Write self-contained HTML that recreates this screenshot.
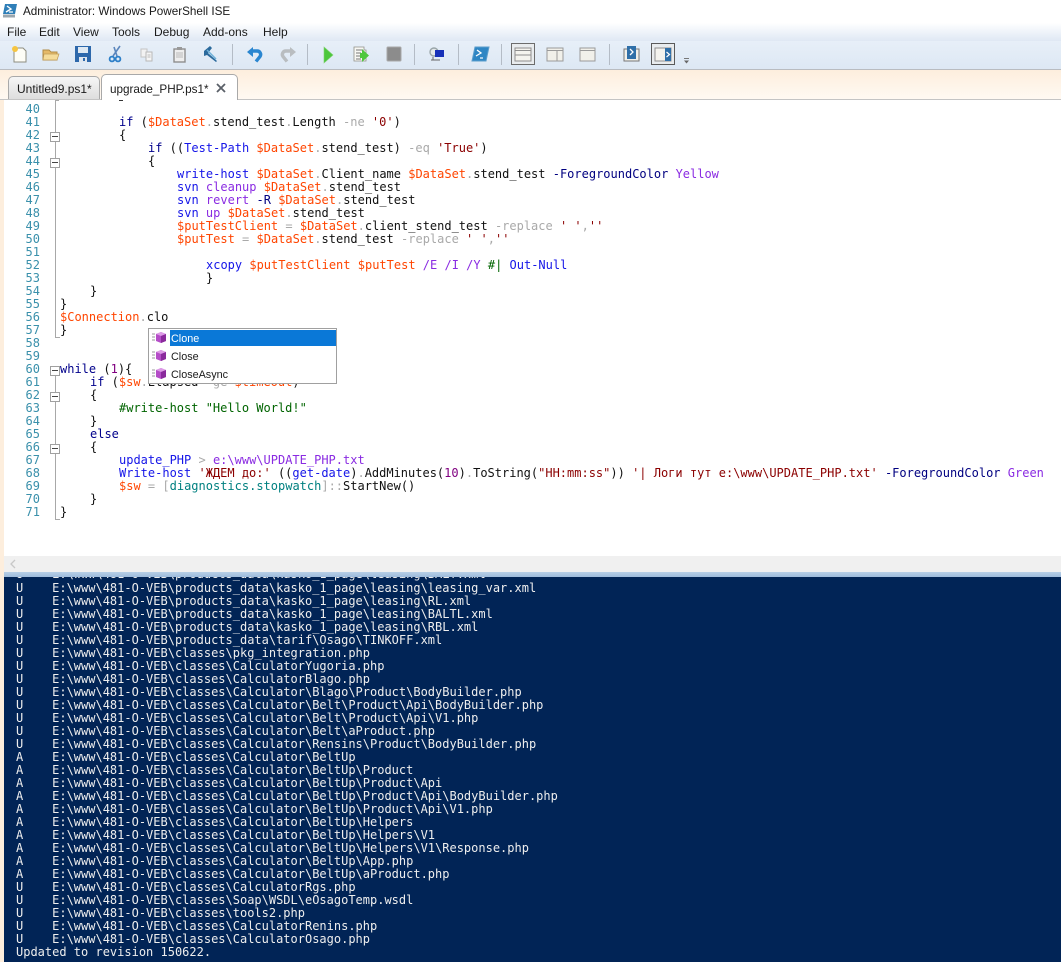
<!DOCTYPE html>
<html><head><meta charset="utf-8"><style>
html,body{margin:0;padding:0;background:#fff}
#r{position:relative;width:1061px;height:962px;overflow:hidden;background:#fff;font-family:"Liberation Sans",sans-serif;color:#1a1a1a}
.a{position:absolute}
.t{position:absolute;white-space:pre;font-size:12px}
.l{position:absolute;white-space:pre;font:12px/13px "DejaVu Sans Mono","Noto Sans CJK JP",monospace;height:13px;color:#111}
.n{position:absolute;width:36px;left:4px;text-align:right;font:12px/13px "DejaVu Sans Mono",monospace;color:#3a90ab}
.v{color:#ff4500}.c{color:#1515e8}.g{color:#8a2be2}.k{color:#00008b}.s{color:#8b0000}.o{color:#a9a9a9}.d{color:#800080}.m{color:#006400}.p{color:#000080}.y{color:#008080}
.f{position:absolute;left:50px;width:8px;height:8px;border:1px solid #a0a0a0;background:#fff;margin-top:1px}
.f:after{content:"";position:absolute;left:1px;top:3px;width:6px;height:1px;background:#444}
.ct{position:absolute;left:16px;white-space:pre;font:12px/13px "DejaVu Sans Mono",monospace;color:#eee;height:13px;margin-top:1px}
</style></head><body><div id="r">

<!-- title -->
<svg class="a" style="left:2px;top:3px" width="16" height="16" viewBox="0 0 16 16"><path d="M3 1h12l-2 10H1z" fill="#2f7fb8"/><path d="M1 11.500h12v3H1z" fill="#9aa6ae"/><path d="M5 3l4 3-5 3" fill="none" stroke="#fff" stroke-width="1.400"/><path d="M7 9h4" stroke="#fff" stroke-width="1.200"/></svg>
<div class="t" style="left:23px;top:4px;font-size:11.700px;line-height:15px">Administrator: Windows PowerShell ISE</div>

<!-- menu -->
<div class="a" style="left:0;top:23px;width:1061px;height:47px;background:linear-gradient(#ffffff 0,#f2f6fb 7px,#dfe8f4 18px,#e7eff8 18px,#dde8f4 46px)"></div>
<div class="t" style="left:7px;top:25px;line-height:15px">File</div>
<div class="t" style="left:39px;top:25px;line-height:15px">Edit</div>
<div class="t" style="left:73px;top:25px;line-height:15px">View</div>
<div class="t" style="left:112px;top:25px;line-height:15px">Tools</div>
<div class="t" style="left:154px;top:25px;line-height:15px">Debug</div>
<div class="t" style="left:203px;top:25px;line-height:15px">Add-ons</div>
<div class="t" style="left:263px;top:25px;line-height:15px">Help</div>
<div class="a" style="left:0;top:69px;width:1061px;height:1px;background:#b9bcc0"></div>

<!-- toolbar icons -->
<svg class="a" style="left:0;top:40px" width="1061" height="30" viewBox="0 40 1061 30">
<!-- new -->
<path d="M14 48h9l3 3v11H14z" fill="#fdfdf6" stroke="#8d8d80"/><circle cx="15" cy="49" r="3" fill="#f5c542"/>
<!-- open -->
<path d="M43 50h6l2 2h6v8H43z" fill="#e5b968" stroke="#b08b45"/><path d="M44 54h15l-2 6H43z" fill="#f5dc9a" stroke="#c09a55" stroke-width=".7"/>
<!-- save -->
<rect x="75" y="46" width="16" height="16" fill="#2d68ab"/><rect x="78" y="47" width="10" height="6" fill="#dfe9f2"/><rect x="79" y="57" width="8" height="5" fill="#dfe6ee"/><rect x="83" y="58" width="2" height="3" fill="#2d68ab"/>
<!-- cut -->
<path d="M120 46l-7 10M114 47l3 9" stroke="#5b86bd" stroke-width="1.600" fill="none"/><circle cx="112" cy="59" r="2.400" fill="none" stroke="#2d7fc8" stroke-width="1.800"/><circle cx="118" cy="59" r="2.400" fill="none" stroke="#2d7fc8" stroke-width="1.800"/>
<!-- copy -->
<path d="M141 49h6v8h-6z" fill="#f2f2f2" stroke="#c4c4c4"/><path d="M146 52h6v9h-6z" fill="#f5f5f5" stroke="#b8b8b8"/><path d="M147.500 55h3M147.500 57h3" stroke="#bbb"/>
<!-- paste -->
<rect x="174" y="49" width="11" height="13" fill="#eee" stroke="#8e8e8e" stroke-width="1.400"/><rect x="177" y="47" width="5" height="3" fill="#999"/><path d="M176 53h7M176 55h7M176 57h7" stroke="#bbb"/>
<!-- clear -->
<path d="M204 51l6-5 2 2-4 5 9 8-1 1-9-7-3 1z" fill="#2b6a9c"/><path d="M207 50l9 9" stroke="#6db0d8" stroke-width="1.500"/>
<rect x="232" y="44" width="1" height="21" fill="#b4bcc6"/>
<!-- undo -->
<path d="M253 51h4a3.500 3.500 0 0 1 3 5.500l-4 5" fill="none" stroke="#2a86d0" stroke-width="3.400"/><path d="M247 52l6-5v10z" fill="#2a86d0"/>
<!-- redo -->
<path d="M290 51h-4a3.500 3.500 0 0 0-3 5.500l4 5" fill="none" stroke="#b9bdc0" stroke-width="3.400"/><path d="M296 52l-6-5v10z" fill="#b9bdc0"/>
<rect x="307" y="44" width="1" height="21" fill="#b4bcc6"/>
<!-- run -->
<path d="M324 47l9 8-9 8z" fill="#4cc73b" stroke="#7fd070" stroke-width=".6"/>
<!-- run selection -->
<path d="M354 47h10v3h2v11h-12z" fill="#f8f8f4" stroke="#909088" stroke-width=".8"/><path d="M356 50h6M356 53h5M356 56h5M356 59h5" stroke="#777"/><path d="M362 49l7 6.500-7 6.500z" fill="#4fc73e"/><path d="M360 53h3v5h-3z" fill="#4fc73e"/>
<!-- stop -->
<rect x="387" y="47" width="14" height="14" rx="1" fill="#8c8c8c" stroke="#a8a8a8"/>
<rect x="414" y="44" width="1" height="21" fill="#b4bcc6"/>
<!-- remote -->
<circle cx="434" cy="52" r="4" fill="#e4e8ea" stroke="#99a5a8" stroke-width="1.400"/><rect x="435" y="50" width="9" height="7" fill="#1730b8"/><path d="M433 57v3h7M431 60h9" stroke="#666" fill="none"/>
<rect x="458" y="44" width="1" height="21" fill="#b4bcc6"/>
<!-- PS -->
<path d="M475 47h14l-3 14h-14z" fill="#2e86c4" stroke="#5b9dcb"/><path d="M477 50l4 3-5 3" stroke="#fff" stroke-width="1.300" fill="none"/><path d="M480 58h3" stroke="#fff" stroke-width="1.200"/>
<rect x="501" y="44" width="1" height="21" fill="#b4bcc6"/>
<!-- layout 1 -->
<rect x="511.500" y="43.500" width="23" height="21" fill="#e9ecee" stroke="#6c6c6c"/>
<rect x="515" y="48" width="16" height="13" fill="#f4f3ee" stroke="#8e8e8e"/><path d="M515 50.500h16M515 55h16" stroke="#8e8e8e"/>
<!-- layout 2 -->
<rect x="547" y="48" width="16" height="13" fill="#f1f0ea" stroke="#9a9a9a"/><path d="M547 50.500h16M557 50v11" stroke="#9a9a9a"/>
<!-- layout 3 -->
<rect x="580" y="48" width="15" height="13" fill="#f1f0ea" stroke="#9a9a9a"/><path d="M580 50.500h15" stroke="#9a9a9a"/>
<rect x="609" y="44" width="1" height="21" fill="#b4bcc6"/>
<!-- script pane top -->
<rect x="624" y="49" width="15" height="12" fill="#f1f0ea" stroke="#777"/><rect x="627" y="46" width="9" height="13" fill="#2f6fa8"/><path d="M630 49l3 3-3 3" stroke="#fff" stroke-width="1.300" fill="none"/>
<!-- script pane right -->
<rect x="651.500" y="43.500" width="23" height="21" fill="#e9ecee" stroke="#5a5a5a"/>
<rect x="655" y="48" width="16" height="13" fill="#f4f3ee" stroke="#8e8e8e"/><rect x="665" y="48" width="6" height="13" fill="#2f6fa8"/><path d="M666.500 52l3 2.500-3 2.500" stroke="#fff" stroke-width="1.200" fill="none"/>
<!-- overflow -->
<path d="M684 58.500h5" stroke="#777"/><path d="M684 60.500h5l-2.500 3z" fill="#666"/>
</svg>

<!-- tab strip -->
<div class="a" style="left:0;top:70px;width:1061px;height:29px;background:linear-gradient(#fdeedd,#fff9f2)"></div>
<div class="a" style="left:8px;top:76px;width:92px;height:24px;box-sizing:border-box;border:1px solid #a9a9a9;border-bottom:none;border-radius:5px 5px 0 0;background:linear-gradient(#f6f6f6,#dcdcdc)"></div>
<div class="t" style="left:17px;top:82px;line-height:15px">Untitled9.ps1*</div>
<div class="a" style="left:0;top:99px;width:1061px;height:1px;background:#c4c4c4"></div>
<div class="a" style="left:101px;top:74px;width:137px;height:26px;box-sizing:border-box;border:1px solid #a9a9a9;border-bottom:none;border-radius:5px 5px 0 0;background:#fff"></div>
<div class="t" style="left:110px;top:82px;line-height:15px;font-size:11.700px">upgrade_PHP.ps1*</div>
<svg class="a" style="left:216px;top:83px" width="10" height="10"><path d="M1 1l8 8M9 1l-8 8" stroke="#5a6068" stroke-width="1.800"/></svg>

<!-- editor -->
<div class="a" style="left:0;top:100px;width:4px;height:862px;background:#fdeedd"></div>
<div class="a" style="left:55px;top:100px;width:1px;height:237px;background:#a8a8a8"></div>
<div class="a" style="left:55px;top:100px;width:4px;height:1px;background:#a8a8a8"></div>
<div class="a" style="left:55px;top:337px;width:5px;height:1px;background:#a8a8a8"></div>
<div class="a" style="left:55px;top:369px;width:1px;height:150px;background:#a8a8a8"></div>
<div class="a" style="left:55px;top:519px;width:5px;height:1px;background:#a8a8a8"></div>
<div class="f" style="top:131px"></div><div class="f" style="top:157px"></div><div class="f" style="top:365px"></div><div class="f" style="top:391px"></div><div class="f" style="top:443px"></div>

<div class="n" style="top:103px">40</div><div class="n" style="top:116px">41</div><div class="n" style="top:129px">42</div><div class="n" style="top:142px">43</div><div class="n" style="top:155px">44</div><div class="n" style="top:168px">45</div><div class="n" style="top:181px">46</div><div class="n" style="top:194px">47</div><div class="n" style="top:207px">48</div><div class="n" style="top:220px">49</div><div class="n" style="top:233px">50</div><div class="n" style="top:246px">51</div><div class="n" style="top:259px">52</div><div class="n" style="top:272px">53</div><div class="n" style="top:285px">54</div><div class="n" style="top:298px">55</div><div class="n" style="top:311px">56</div><div class="n" style="top:324px">57</div><div class="n" style="top:337px">58</div><div class="n" style="top:350px">59</div><div class="n" style="top:363px">60</div><div class="n" style="top:376px">61</div><div class="n" style="top:389px">62</div><div class="n" style="top:402px">63</div><div class="n" style="top:415px">64</div><div class="n" style="top:428px">65</div><div class="n" style="top:441px">66</div><div class="n" style="top:454px">67</div><div class="n" style="top:467px">68</div><div class="n" style="top:480px">69</div><div class="n" style="top:493px">70</div><div class="n" style="top:506px">71</div>

<div class="a" style="left:119px;top:100px;width:4px;height:1px;background:#333"></div>
<div class="l" style="left:119px;top:116px"><span class="k">if</span> (<span class="v">$DataSet</span><span class="o">.</span>stend_test<span class="o">.</span>Length <span class="o">-ne</span> <span class="s">'0'</span>)</div>
<div class="l" style="left:119px;top:129px">{</div>
<div class="l" style="left:148px;top:142px"><span class="k">if</span> ((<span class="c">Test-Path</span> <span class="v">$DataSet</span><span class="o">.</span>stend_test) <span class="o">-eq</span> <span class="s">'True'</span>)</div>
<div class="l" style="left:148px;top:155px">{</div>
<div class="l" style="left:177px;top:168px"><span class="c">write-host</span> <span class="v">$DataSet</span><span class="o">.</span>Client_name <span class="v">$DataSet</span><span class="o">.</span>stend_test <span class="p">-ForegroundColor</span> <span class="g">Yellow</span></div>
<div class="l" style="left:177px;top:181px"><span class="c">svn</span> <span class="g">cleanup</span> <span class="v">$DataSet</span><span class="o">.</span>stend_test</div>
<div class="l" style="left:177px;top:194px"><span class="c">svn</span> <span class="g">revert</span> <span class="p">-R</span> <span class="v">$DataSet</span><span class="o">.</span>stend_test</div>
<div class="l" style="left:177px;top:207px"><span class="c">svn</span> <span class="g">up</span> <span class="v">$DataSet</span><span class="o">.</span>stend_test</div>
<div class="l" style="left:177px;top:220px"><span class="v">$putTestClient</span> <span class="o">=</span> <span class="v">$DataSet</span><span class="o">.</span>client_stend_test <span class="o">-replace</span> <span class="s">' '</span><span class="o">,</span><span class="s">''</span></div>
<div class="l" style="left:177px;top:233px"><span class="v">$putTest</span> <span class="o">=</span> <span class="v">$DataSet</span><span class="o">.</span>stend_test <span class="o">-replace</span> <span class="s">' '</span><span class="o">,</span><span class="s">''</span></div>
<div class="l" style="left:206px;top:259px"><span class="c">xcopy</span> <span class="v">$putTestClient</span> <span class="v">$putTest</span> <span class="g">/E</span> <span class="g">/I</span> <span class="g">/Y</span> <span class="m">#|</span> <span class="c">Out-Null</span></div>
<div class="l" style="left:206px;top:272px">}</div>
<div class="l" style="left:90px;top:285px">}</div>
<div class="l" style="left:60px;top:298px">}</div>
<div class="l" style="left:60px;top:311px"><span class="v">$Connection</span><span class="o">.</span>clo</div>
<div class="l" style="left:60px;top:324px">}</div>
<div class="l" style="left:60px;top:363px"><span class="k">while</span> (<span class="d">1</span>){</div>
<div class="l" style="left:90px;top:376px"><span class="k">if</span> (<span class="v">$sw</span><span class="o">.</span>Elapsed <span class="o">-ge</span> <span class="v">$timeout</span>)</div>
<div class="l" style="left:90px;top:389px">{</div>
<div class="l" style="left:119px;top:402px"><span class="m">#write-host "Hello World!"</span></div>
<div class="l" style="left:90px;top:415px">}</div>
<div class="l" style="left:90px;top:428px"><span class="k">else</span></div>
<div class="l" style="left:90px;top:441px">{</div>
<div class="l" style="left:119px;top:454px"><span class="c">update_PHP</span> <span class="o">&gt;</span> <span class="g">e:\www\UPDATE_PHP.txt</span></div>
<div class="l" style="left:119px;top:467px"><span class="c">Write-host</span> <span class="s">'ЖДЕМ до:'</span> ((<span class="c">get-date</span>)<span class="o">.</span>AddMinutes(<span class="d">10</span>)<span class="o">.</span>ToString(<span class="s">"HH:mm:ss"</span>)) <span class="s">'| Логи тут e:\www\UPDATE_PHP.txt'</span> <span class="p">-ForegroundColor</span> <span class="g">Green</span></div>
<div class="l" style="left:119px;top:480px"><span class="v">$sw</span> <span class="o">=</span> <span class="o">[</span><span class="y">diagnostics.stopwatch</span><span class="o">]::</span>StartNew()</div>
<div class="l" style="left:90px;top:493px">}</div>
<div class="l" style="left:60px;top:506px">}</div>

<!-- popup -->
<div class="a" style="left:148px;top:328px;width:189px;height:56px;box-sizing:border-box;border:1px solid #a0a0a0;background:#fff"></div>
<div class="a" style="left:170px;top:330px;width:166px;height:16px;background:#0a78d7"></div>
<div class="t" style="left:171px;top:332px;font-size:10.800px;line-height:15px;color:#fff">Clone</div>
<div class="t" style="left:171px;top:350px;font-size:10.800px;line-height:15px">Close</div>
<div class="t" style="left:171px;top:368px;font-size:10.800px;line-height:15px">CloseAsync</div>
<svg class="a" style="left:151px;top:331px" width="16" height="50" viewBox="0 0 16 50"><g><path d="M5 3l5-2 5 2v7l-5 2-5-2z" fill="#b54dc8"/><path d="M5 3l5 2 5-2-5-2z" fill="#dd9be6"/><path d="M10 5v7l5-2V3z" fill="#8a2a9c"/><path d="M1 3h3M1 6h3M1 9h3" stroke="#999"/></g><g transform="translate(0,18)"><path d="M5 3l5-2 5 2v7l-5 2-5-2z" fill="#b54dc8"/><path d="M5 3l5 2 5-2-5-2z" fill="#dd9be6"/><path d="M10 5v7l5-2V3z" fill="#8a2a9c"/><path d="M1 3h3M1 6h3M1 9h3" stroke="#999"/></g><g transform="translate(0,36)"><path d="M5 3l5-2 5 2v7l-5 2-5-2z" fill="#b54dc8"/><path d="M5 3l5 2 5-2-5-2z" fill="#dd9be6"/><path d="M10 5v7l5-2V3z" fill="#8a2a9c"/><path d="M1 3h3M1 6h3M1 9h3" stroke="#999"/></g></svg>

<!-- hscroll -->
<div class="a" style="left:4px;top:556px;width:1057px;height:16px;background:#f0f0f0"></div>
<svg class="a" style="left:9px;top:559px" width="8" height="10"><path d="M6 1L2 5l4 4" stroke="#c8c8c8" stroke-width="1.300" fill="none"/></svg>
<div class="a" style="left:4px;top:572px;width:1057px;height:5px;background:linear-gradient(#b8cfe6,#9dbbdc)"></div>

<!-- console -->
<div class="a" style="left:4px;top:577px;width:1057px;height:385px;background:#012456;overflow:hidden">
<div class="ct" style="left:12px;top:-10px">U    E:\www\481-O-VEB\products_data\kasko_1_page\leasing\BALT.xml</div>
</div>
<div class="ct" style="top:581px">U    E:\www\481-O-VEB\products_data\kasko_1_page\leasing\leasing_var.xml</div>
<div class="ct" style="top:594px">U    E:\www\481-O-VEB\products_data\kasko_1_page\leasing\RL.xml</div>
<div class="ct" style="top:607px">U    E:\www\481-O-VEB\products_data\kasko_1_page\leasing\BALTL.xml</div>
<div class="ct" style="top:620px">U    E:\www\481-O-VEB\products_data\kasko_1_page\leasing\RBL.xml</div>
<div class="ct" style="top:633px">U    E:\www\481-O-VEB\products_data\tarif\Osago\TINKOFF.xml</div>
<div class="ct" style="top:646px">U    E:\www\481-O-VEB\classes\pkg_integration.php</div>
<div class="ct" style="top:659px">U    E:\www\481-O-VEB\classes\CalculatorYugoria.php</div>
<div class="ct" style="top:672px">U    E:\www\481-O-VEB\classes\CalculatorBlago.php</div>
<div class="ct" style="top:685px">U    E:\www\481-O-VEB\classes\Calculator\Blago\Product\BodyBuilder.php</div>
<div class="ct" style="top:698px">U    E:\www\481-O-VEB\classes\Calculator\Belt\Product\Api\BodyBuilder.php</div>
<div class="ct" style="top:711px">U    E:\www\481-O-VEB\classes\Calculator\Belt\Product\Api\V1.php</div>
<div class="ct" style="top:724px">U    E:\www\481-O-VEB\classes\Calculator\Belt\aProduct.php</div>
<div class="ct" style="top:737px">U    E:\www\481-O-VEB\classes\Calculator\Rensins\Product\BodyBuilder.php</div>
<div class="ct" style="top:750px">A    E:\www\481-O-VEB\classes\Calculator\BeltUp</div>
<div class="ct" style="top:763px">A    E:\www\481-O-VEB\classes\Calculator\BeltUp\Product</div>
<div class="ct" style="top:776px">A    E:\www\481-O-VEB\classes\Calculator\BeltUp\Product\Api</div>
<div class="ct" style="top:789px">A    E:\www\481-O-VEB\classes\Calculator\BeltUp\Product\Api\BodyBuilder.php</div>
<div class="ct" style="top:802px">A    E:\www\481-O-VEB\classes\Calculator\BeltUp\Product\Api\V1.php</div>
<div class="ct" style="top:815px">A    E:\www\481-O-VEB\classes\Calculator\BeltUp\Helpers</div>
<div class="ct" style="top:828px">A    E:\www\481-O-VEB\classes\Calculator\BeltUp\Helpers\V1</div>
<div class="ct" style="top:841px">A    E:\www\481-O-VEB\classes\Calculator\BeltUp\Helpers\V1\Response.php</div>
<div class="ct" style="top:854px">A    E:\www\481-O-VEB\classes\Calculator\BeltUp\App.php</div>
<div class="ct" style="top:867px">A    E:\www\481-O-VEB\classes\Calculator\BeltUp\aProduct.php</div>
<div class="ct" style="top:880px">U    E:\www\481-O-VEB\classes\CalculatorRgs.php</div>
<div class="ct" style="top:893px">U    E:\www\481-O-VEB\classes\Soap\WSDL\eOsagoTemp.wsdl</div>
<div class="ct" style="top:906px">U    E:\www\481-O-VEB\classes\tools2.php</div>
<div class="ct" style="top:919px">U    E:\www\481-O-VEB\classes\CalculatorRenins.php</div>
<div class="ct" style="top:932px">U    E:\www\481-O-VEB\classes\CalculatorOsago.php</div>
<div class="ct" style="top:945px">Updated to revision 150622.</div>
</div></body></html>
